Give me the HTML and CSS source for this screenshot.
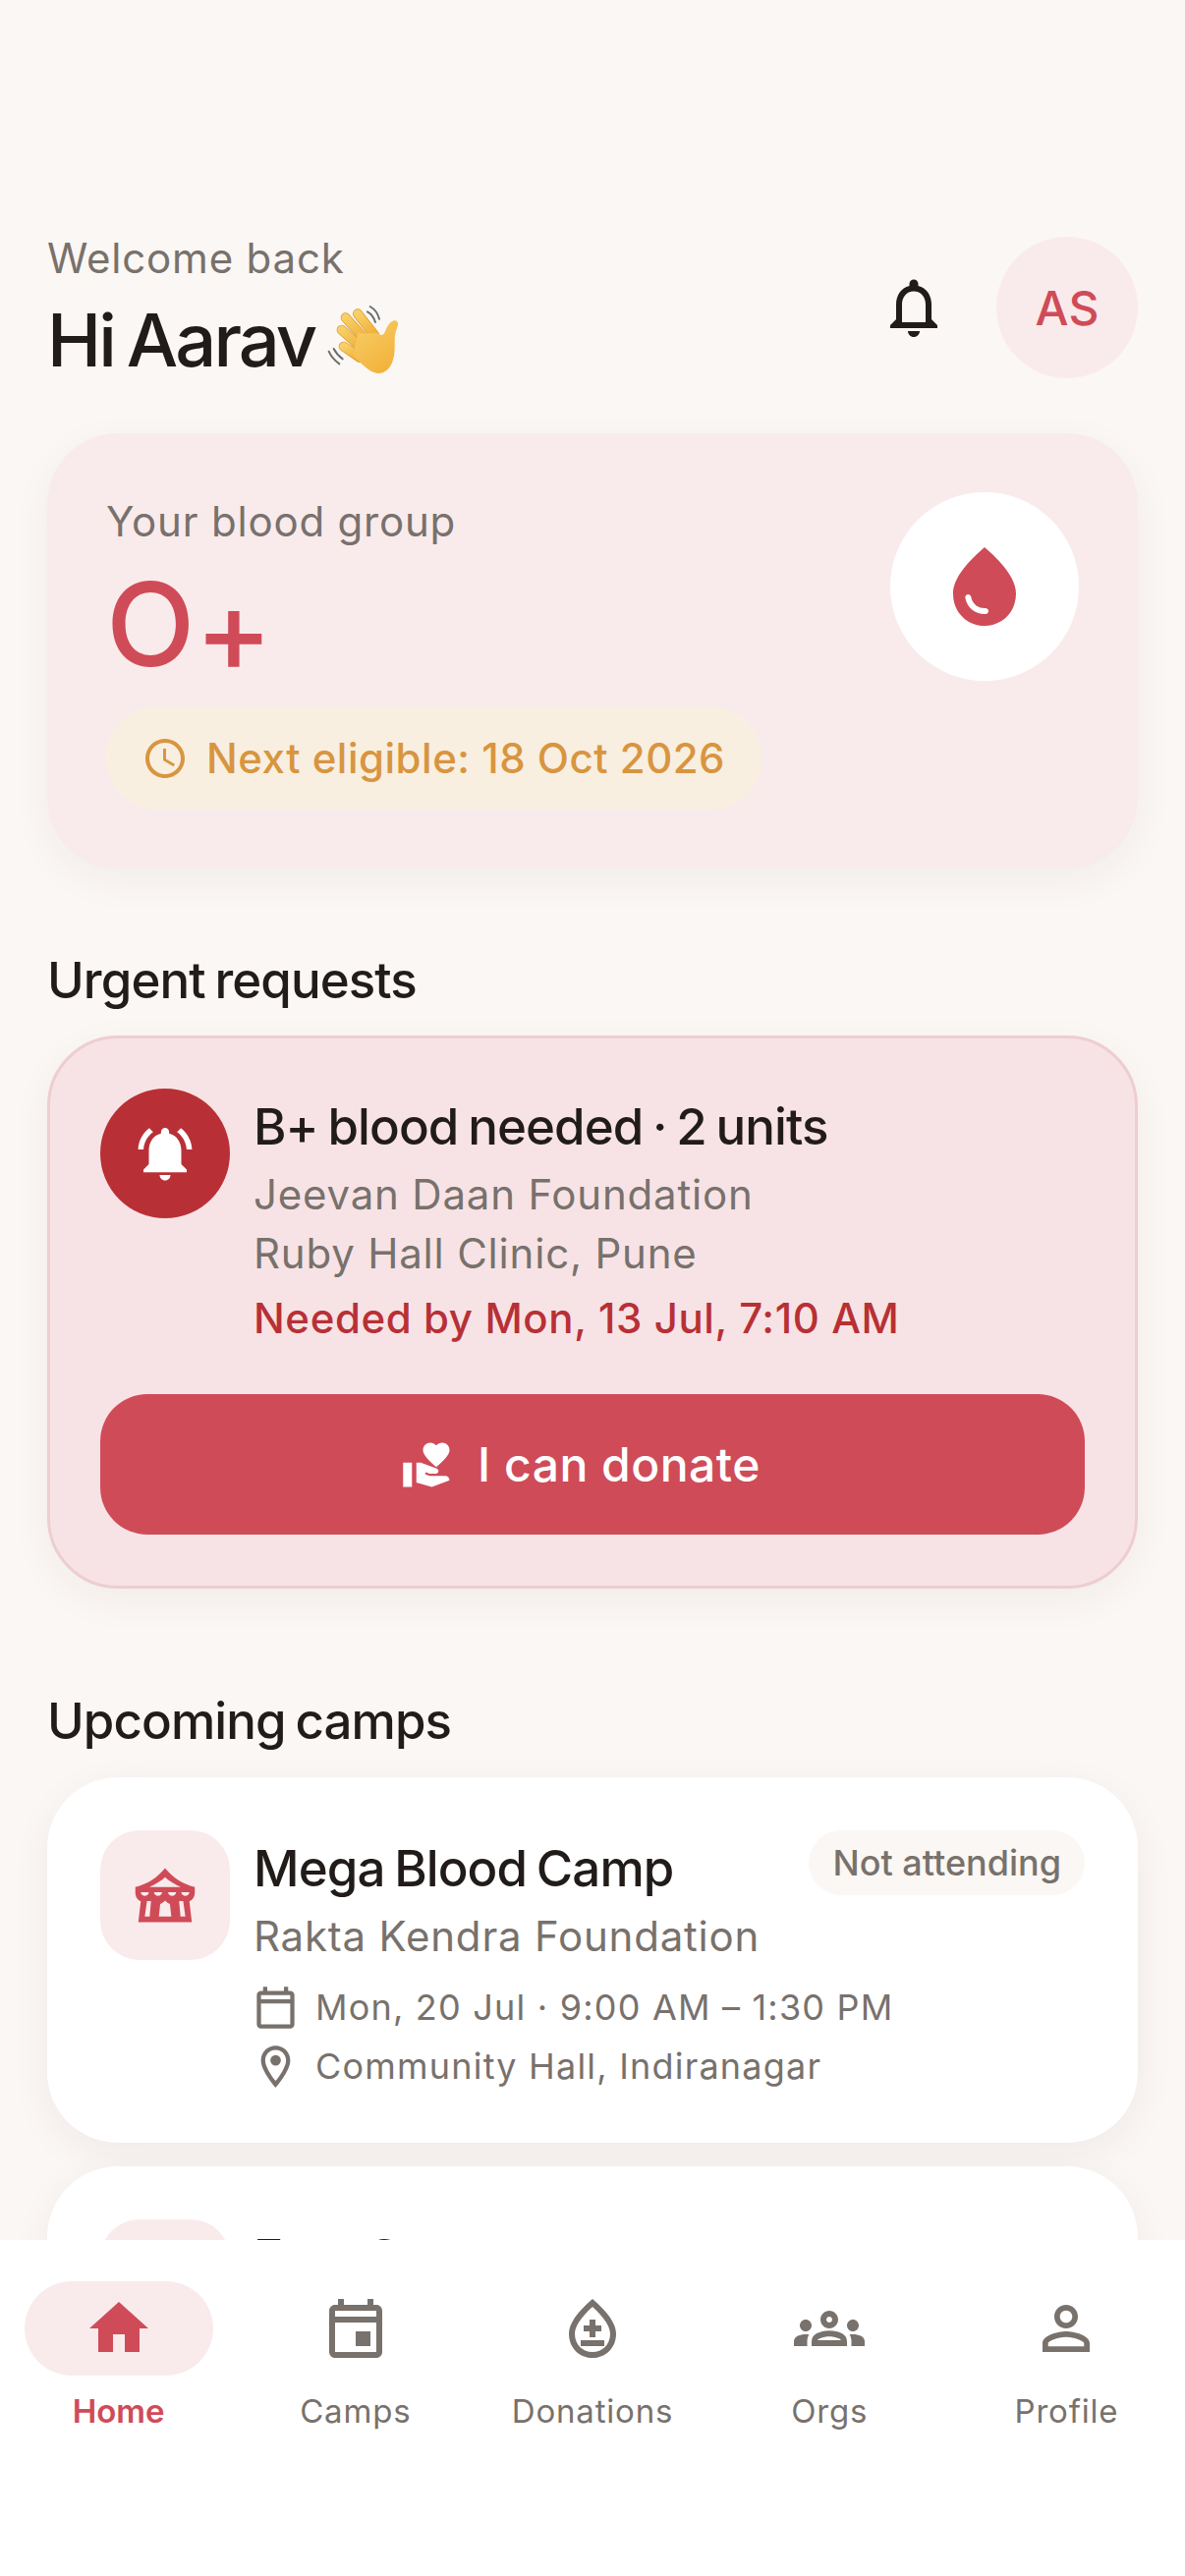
FILE: index.html
```html
<!DOCTYPE html>
<html lang="en">
  <head>
    <meta charset="UTF-8" />
    <meta name="viewport" content="width=device-width, initial-scale=1.0" />
    <title>Home</title>
    <link rel="stylesheet" href="styles.css">
  </head>

  <body>
    <div class="screen">
      <main class="content">
        <header class="top">
          <div>
            <p class="welcome">Welcome back</p>
            <h1 class="hello">Hi Aarav
              <svg class="wave" viewBox="90 50 240 240" role="img" aria-label="waving hand">
                <defs>
                  <linearGradient id="skin" x1="0" y1="0" x2="0.6" y2="1">
                    <stop offset="0" stop-color="#f8cf68" />
                    <stop offset="1" stop-color="#f2b33c" />
                  </linearGradient>
                </defs>
                <g fill="none" stroke="#6b6f72" stroke-width="6" stroke-linecap="round">
                  <path d="M227 68c14 8 24 22 28 38" />
                  <path d="M219 84c12 7 20 18 24 32" />
                  <path d="M101 205c6 14 18 28 32 38" />
                  <path d="M116 197c6 12 15 22 27 31" />
                </g>
                <g fill="none" stroke-linecap="round">
                  <g stroke="#d99a2e" stroke-width="30">
                    <path d="M152 102l62 68" />
                    <path d="M189 90l52 66" />
                    <path d="M140 139l62 56" />
                    <path d="M146 190l50 34" />
                  </g>
                  <g stroke="url(#skin)" stroke-width="26">
                    <path d="M152 102l62 68" />
                    <path d="M189 90l52 66" />
                    <path d="M140 139l62 56" />
                    <path d="M146 190l50 34" />
                  </g>
                </g>
                <path fill="url(#skin)" d="M190 150l60 0c8 8 18 6 22-4 4-12 12-28 24-34 10-4 18 2 16 12-4 14-10 26-10 44 0 26 2 46-8 72-8 20-26 34-44 32-18-2-36-16-52-32l-24-24z" />
              </svg>
            </h1>
          </div>
          <div class="top-actions">
            <svg class="icon-72 bell" viewBox="0 0 24 24"><path d="M12 22c1.1 0 2-.9 2-2h-4c0 1.1.9 2 2 2zm6-6v-5c0-3.07-1.63-5.64-4.5-6.32V4c0-.83-.67-1.5-1.5-1.5s-1.5.67-1.5 1.5v.68C7.64 5.36 6 7.92 6 11v5l-2 2v1h16v-1l-2-2zm-2 1H8v-6c0-2.48 1.51-4.5 4-4.5s4 2.02 4 4.5v6z" /></svg>
            <div class="avatar">AS</div>
          </div>
        </header>

        <section class="blood-card">
          <div>
            <p class="blood-label">Your blood group</p>
            <p class="blood-value">O<span class="blood-sign">+</span></p>
            <p class="eligible">
              <svg class="icon-48" viewBox="0 0 24 24"><path d="M11.99 2C6.47 2 2 6.48 2 12s4.47 10 9.99 10C17.52 22 22 17.52 22 12S17.52 2 11.99 2zM12 20c-4.42 0-8-3.58-8-8s3.58-8 8-8 8 3.58 8 8-3.58 8-8 8zm.5-13H11v6l5.25 3.15.75-1.23-4.5-2.67z" /></svg>
              Next eligible: 18 Oct 2026
            </p>
          </div>
          <div class="drop-circle">
            <svg class="icon-96" viewBox="0 0 24 24"><path fill-rule="evenodd" d="M12 2c-5.33 4.55-8 8.48-8 11.8 0 4.98 3.8 8.2 8 8.2s8-3.22 8-8.2c0-3.32-2.67-7.25-8-11.8zm-4.17 12c.37 0 .67.26.74.62.41 2.22 2.28 2.98 3.64 2.87.43-.02.79.32.79.75 0 .4-.32.73-.72.75-2.13.13-4.62-1.09-5.19-4.12-.08-.45.28-.87.74-.87z" /></svg>
          </div>
        </section>

        <h2 class="section-title">Urgent requests</h2>
        <section class="urgent-card">
          <div class="urgent-row">
            <div class="alert-circle">
              <svg class="icon-66" viewBox="0 0 24 24"><path d="M7.58 4.08L6.15 2.65C3.75 4.48 2.17 7.3 2.03 10.5h2c.15-2.65 1.51-4.97 3.55-6.42zm12.39 6.42h2c-.15-3.2-1.73-6.02-4.12-7.85l-1.42 1.43c2.02 1.45 3.39 3.77 3.54 6.42zM18 11c0-3.07-1.64-5.64-4.5-6.32V4c0-.83-.67-1.5-1.5-1.5s-1.5.67-1.5 1.5v.68C7.63 5.36 6 7.92 6 11v5l-2 2v1h16v-1l-2-2v-5zm-6 11c.14 0 .27-.01.4-.04.65-.14 1.18-.58 1.44-1.18.1-.24.15-.5.15-.78h-4c.01 1.1.9 2 2.01 2z" /></svg>
            </div>
            <div class="urgent-text">
              <h3 class="item-title">B+ blood needed · 2 units</h3>
              <p class="item-sub urgent-org">Jeevan Daan Foundation</p>
              <p class="item-sub">Ruby Hall Clinic, Pune</p>
              <p class="needed-by">Needed by Mon, 13 Jul, 7:10 AM</p>
            </div>
          </div>
          <button class="donate-btn">
            <svg class="icon-54" viewBox="0 0 24 24"><path d="M1 11h4v11H1zm15-7.75C16.65 2.49 17.66 2 18.7 2 20.55 2 22 3.45 22 5.3c0 2.27-2.91 4.9-6 7.7-3.09-2.81-6-5.44-6-7.7C10 3.45 11.45 2 13.3 2c1.04 0 2.05.49 2.7 1.25zM20 17h-7l-2.09-.73.33-.94L13 16h2.82c.65 0 1.18-.53 1.18-1.18 0-.49-.31-.93-.77-1.11L8.97 11H7v9.02L14 22l8.01-3c-.01-1.1-.9-2-2.01-2z" /></svg>
            I can donate
          </button>
        </section>

        <h2 class="section-title camps-title">Upcoming camps</h2>
        <section class="camp-card">
          <div class="camp-tile">
            <svg class="icon-66" viewBox="0 0 24 24"><path fill-rule="evenodd" d="M12 2C9 5.6 5.5 7.9 1 9v2c0 1.4.6 2.7 2 3.3L2.100 22h19.800L21 14.300c1.400-.6 2-1.900 2-3.300V9c-4.500-1.100-8-3.400-11-7zm0 3.400C10.600 6.700 8.500 8 6.200 9h11.600C15.500 8 13.400 6.700 12 5.400zM3 10.900h3c-.2 1.800-2.800 1.800-3 0zm4.900 0h3c-.2 1.800-2.800 1.800-3 0zm5.200 0h3c-.2 1.800-2.800 1.800-3 0zm4.900 0h3c-.2 1.800-2.800 1.800-3 0zM5.300 14.200h1.500l-.5 5.700H4.500zm4.400 5.700l.5-4.600c.8-.3 1.300-.8 1.800-1.300.5.500 1 1 1.800 1.300l.5 4.600zm7.500-5.700h1.500l.8 5.700h-1.800z" /></svg>
          </div>
          <div class="camp-body">
            <div class="camp-head">
              <h3 class="item-title">Mega Blood Camp</h3>
              <span class="status-pill">Not attending</span>
            </div>
            <p class="item-sub camp-org">Rakta Kendra Foundation</p>
            <p class="meta">
              <svg class="icon-51" viewBox="0 0 24 24"><path d="M19 4h-1V2h-2v2H8V2H6v2H5c-1.100 0-2 .9-2 2v14c0 1.100.9 2 2 2h14c1.100 0 2-.9 2-2V6c0-1.100-.9-2-2-2zm0 16H5V10h14v10zm0-12H5V6h14v2z" /></svg>
              Mon, 20 Jul · 9:00 AM – 1:30 PM
            </p>
            <p class="meta">
              <svg class="icon-51" viewBox="0 0 24 24"><path d="M12 2C8.130 2 5 5.130 5 9c0 5.250 7 13 7 13s7-7.750 7-13c0-3.870-3.130-7-7-7zM7 9c0-2.760 2.240-5 5-5s5 2.240 5 5c0 2.880-2.880 7.190-5 9.880C9.920 16.210 7 11.850 7 9z" /><circle cx="12" cy="9" r="2.500" /></svg>
              Community Hall, Indiranagar
            </p>
          </div>
        </section>
        <section class="camp-card">
          <div class="camp-tile"></div>
          <div class="camp-body">
            <div class="camp-head">
              <h3 class="item-title">Free Camp</h3>
            </div>
          </div>
        </section>
      </main>

      <nav class="tabs">
        <a class="tab active">
          <span class="tab-icon"><svg class="icon-72" viewBox="0 0 24 24"><path d="M10 20v-6h4v6h5v-8h3L12 3 2 12h3v8z" /></svg></span>
          Home
        </a>
        <a class="tab">
          <span class="tab-icon"><svg class="icon-72" viewBox="0 0 24 24"><path d="M19 4h-1V2h-2v2H8V2H6v2H5c-1.110 0-1.990.9-1.990 2L3 20c0 1.100.89 2 2 2h14c1.100 0 2-.9 2-2V6c0-1.100-.9-2-2-2zm0 16H5V10h14v10zm0-12H5V6h14v2zm-2 5h-5v5h5v-5z" /></svg></span>
          Camps
        </a>
        <a class="tab">
          <span class="tab-icon"><svg class="icon-72" viewBox="0 0 24 24"><path d="M12 2c-5.330 4.550-8 8.480-8 11.800 0 4.980 3.800 8.200 8 8.200s8-3.220 8-8.200c0-3.320-2.670-7.250-8-11.800zm0 18c-3.350 0-6-2.570-6-6.200 0-2.340 1.950-5.440 6-9.140 4.050 3.700 6 6.790 6 9.140 0 3.630-2.650 6.200-6 6.200zM8 16h8v2H8zm3-7h2v2h2v2h-2v2h-2v-2H9v-2h2z" /></svg></span>
          Donations
        </a>
        <a class="tab">
          <span class="tab-icon"><svg class="icon-72" viewBox="0 0 24 24"><path d="M4 13c1.100 0 2-.9 2-2s-.9-2-2-2-2 .9-2 2 .9 2 2 2zm1.130 1.100c-.37-.06-.74-.1-1.130-.1-.99 0-1.930.21-2.780.58C.48 14.900 0 15.620 0 16.430V18h4.500v-1.610c0-.83.23-1.610.63-2.290zM20 13c1.100 0 2-.9 2-2s-.9-2-2-2-2 .9-2 2 .9 2 2 2zm4 3.430c0-.81-.48-1.530-1.220-1.850-.85-.37-1.790-.58-2.780-.58-.39 0-.76.04-1.130.1.4.68.63 1.460.63 2.290V18H24v-1.570zm-7.760-2.780c-1.170-.52-2.610-.9-4.240-.9-1.630 0-3.070.39-4.240.9C6.680 14.130 6 15.210 6 16.390V18h12v-1.610c0-1.180-.68-2.260-1.760-2.740zM8.070 16c.09-.23.13-.39.91-.69.97-.38 1.990-.56 3.020-.56s2.050.18 3.020.56c.77.3.81.46.91.69H8.070zM12 8c.55 0 1 .45 1 1s-.45 1-1 1-1-.45-1-1 .45-1 1-1m0-2c-1.660 0-3 1.340-3 3s1.340 3 3 3 3-1.340 3-3-1.340-3-3-3z" /></svg></span>
          Orgs
        </a>
        <a class="tab">
          <span class="tab-icon"><svg class="icon-72" viewBox="0 0 24 24"><path d="M12 5.900c1.160 0 2.100.94 2.100 2.100s-.94 2.100-2.100 2.100S9.900 9.160 9.900 8s.94-2.100 2.100-2.100m0 9c2.970 0 6.100 1.460 6.100 2.100v1.100H5.900V17c0-.64 3.130-2.100 6.100-2.100M12 4C9.790 4 8 5.790 8 8s1.790 4 4 4 4-1.790 4-4-1.790-4-4-4zm0 9c-2.670 0-8 1.340-8 4v3h16v-3c0-2.660-5.330-4-8-4z" /></svg></span>
          Profile
        </a>
      </nav>
    </div>
  </body>
</html>
```

FILE: styles.css
```css
* {
  box-sizing: border-box;
}

body {
  margin: 0;
  font-family: Inter, "Liberation Sans", sans-serif;
  color: #211c1a;
  background-color: #fbf7f4;
}

h1,
h2,
h3,
p {
  margin: 0;
  font-weight: 400;
}

svg {
  display: block;
  flex: none;
  fill: currentColor;
}

.icon-48 {
  width: 48px;
  height: 48px;
}

.icon-51 {
  width: 51px;
  height: 51px;
}

.icon-54 {
  width: 54px;
  height: 54px;
}

.icon-66 {
  width: 66px;
  height: 66px;
}

.icon-72 {
  width: 72px;
  height: 72px;
}

.icon-96 {
  width: 96px;
  height: 96px;
}

.screen {
  display: flex;
  flex-direction: column;
  height: 2622px;
  overflow: hidden;
}

.content {
  flex: 1;
  min-height: 0;
  overflow: hidden;
  padding: 241px 48px 0;
}

/* greeting row */

.top {
  display: flex;
  justify-content: space-between;
  align-items: flex-start;
  height: 144px;
}

.welcome {
  font-size: 42px;
  line-height: 44px;
  letter-spacing: 0.8px;
  color: #78716c;
}

.hello {
  display: flex;
  align-items: center;
  gap: 11px;
  margin-top: 16px;
  font-size: 74px;
  line-height: 90px;
  font-weight: 500;
  letter-spacing: -2.9px;
  word-spacing: -4px;
}

.wave {
  width: 80px;
  height: 80px;
}

.top-actions {
  display: flex;
  align-items: center;
  gap: 48px;
}

.avatar {
  display: flex;
  align-items: center;
  justify-content: center;
  width: 144px;
  height: 144px;
  border-radius: 50%;
  background-color: #f9ebec;
  color: #d04b58;
  font-size: 48px;
  font-weight: 500;
}

/* blood group card */

.blood-card {
  display: flex;
  justify-content: space-between;
  align-items: flex-start;
  height: 443px;
  margin-top: 56px;
  padding: 60px;
  border-radius: 72px;
  background-color: #f9ebec;
  box-shadow: 0 12px 40px rgba(60, 40, 30, 0.05);
}

.blood-label {
  margin-top: 3px;
  font-size: 42px;
  line-height: 54px;
  letter-spacing: 0.8px;
  color: #78716c;
}

.blood-value {
  margin-top: 17px;
  font-size: 118px;
  line-height: 120px;
  font-weight: 500;
  color: #d04b58;
}

.blood-sign {
  vertical-align: -6px;
  line-height: 0;
}

.eligible {
  display: inline-flex;
  align-items: center;
  gap: 18px;
  height: 105px;
  margin-top: 24px;
  padding: 0 37px 0 36px;
  border-radius: 53px;
  background-color: #f9efe0;
  color: #d89540;
  font-size: 42px;
  font-weight: 500;
  letter-spacing: 0.5px;
}

.drop-circle {
  display: flex;
  align-items: center;
  justify-content: center;
  width: 192px;
  height: 192px;
  border-radius: 50%;
  background-color: #fff;
  color: #d04b58;
}

/* section headings */

.section-title {
  margin-top: 81px;
  font-size: 51px;
  line-height: 66px;
  font-weight: 500;
  letter-spacing: -0.9px;
  word-spacing: -3px;
}

.camps-title {
  margin-top: 102px;
}

/* urgent request */

.urgent-card {
  margin-top: 23px;
  padding: 51px 51px 52px;
  border: 3px solid #eecdd0;
  border-radius: 72px;
  background-color: #f7e3e5;
  box-shadow: 0 12px 40px rgba(60, 40, 30, 0.05);
}

.urgent-row {
  display: flex;
  gap: 24px;
}

.urgent-text {
  padding-top: 6px;
}

.urgent-org {
  margin-top: 6px;
}

.alert-circle {
  display: flex;
  align-items: center;
  justify-content: center;
  flex: none;
  width: 132px;
  height: 132px;
  border-radius: 50%;
  background-color: #b83035;
  color: #fff;
}

.item-title {
  font-size: 51px;
  line-height: 66px;
  font-weight: 500;
  letter-spacing: -0.9px;
  word-spacing: -3px;
}

.item-sub {
  font-size: 42px;
  line-height: 60px;
  letter-spacing: 0.8px;
  color: #78716c;
}

.needed-by {
  margin-top: 6px;
  font-size: 42px;
  line-height: 60px;
  font-weight: 500;
  letter-spacing: 0.6px;
  color: #b83035;
}

.donate-btn {
  display: flex;
  align-items: center;
  justify-content: center;
  gap: 24px;
  width: 100%;
  height: 143px;
  margin-top: 47px;
  padding: 0 24px 0 0;
  border: 0;
  border-radius: 48px;
  background-color: #d04b58;
  color: #fff;
  font-family: inherit;
  font-size: 48px;
  font-weight: 500;
  letter-spacing: 0.5px;
}

/* camp cards */

.camp-card {
  display: flex;
  gap: 24px;
  height: 372px;
  margin-top: 24px;
  padding: 54px;
  border-radius: 72px;
  background-color: #fff;
  box-shadow: 0 12px 40px rgba(60, 40, 30, 0.06);
}

.camp-tile {
  display: flex;
  align-items: center;
  justify-content: center;
  flex: none;
  width: 132px;
  height: 132px;
  border-radius: 40px;
  background-color: #f9ebec;
  color: #d04b58;
}

.camp-body {
  flex: 1;
  min-width: 0;
}

.camp-head {
  display: flex;
  justify-content: space-between;
  align-items: flex-start;
}

.camp-head .item-title {
  padding-top: 6px;
}

.status-pill {
  height: 66px;
  padding: 0 24px;
  border-radius: 33px;
  background-color: #fbf7f4;
  color: #78716c;
  font-size: 36px;
  line-height: 66px;
  font-weight: 500;
}

.meta {
  display: flex;
  align-items: center;
  gap: 15px;
  height: 60px;
  margin-left: -3px;
  font-size: 36px;
  letter-spacing: 1.2px;
  color: #78716c;
}

.camp-org {
  margin-top: 6px;
  margin-bottom: 12px;
}

/* bottom tabs */

.tabs {
  display: grid;
  grid-template-columns: repeat(5, 1fr);
  flex: none;
  height: 342px;
  padding-top: 42px;
  background-color: #fff;
}

.tab {
  display: flex;
  flex-direction: column;
  align-items: center;
  gap: 15px;
  font-size: 33px;
  line-height: 42px;
  letter-spacing: 0.8px;
  color: #78716c;
}

.tab-icon {
  display: flex;
  align-items: center;
  justify-content: center;
  width: 192px;
  height: 96px;
  border-radius: 48px;
}

.tab.active {
  color: #d04b58;
  font-weight: 600;
  letter-spacing: 0;
}

.tab.active .tab-icon {
  background-color: #f9ebec;
}
```
